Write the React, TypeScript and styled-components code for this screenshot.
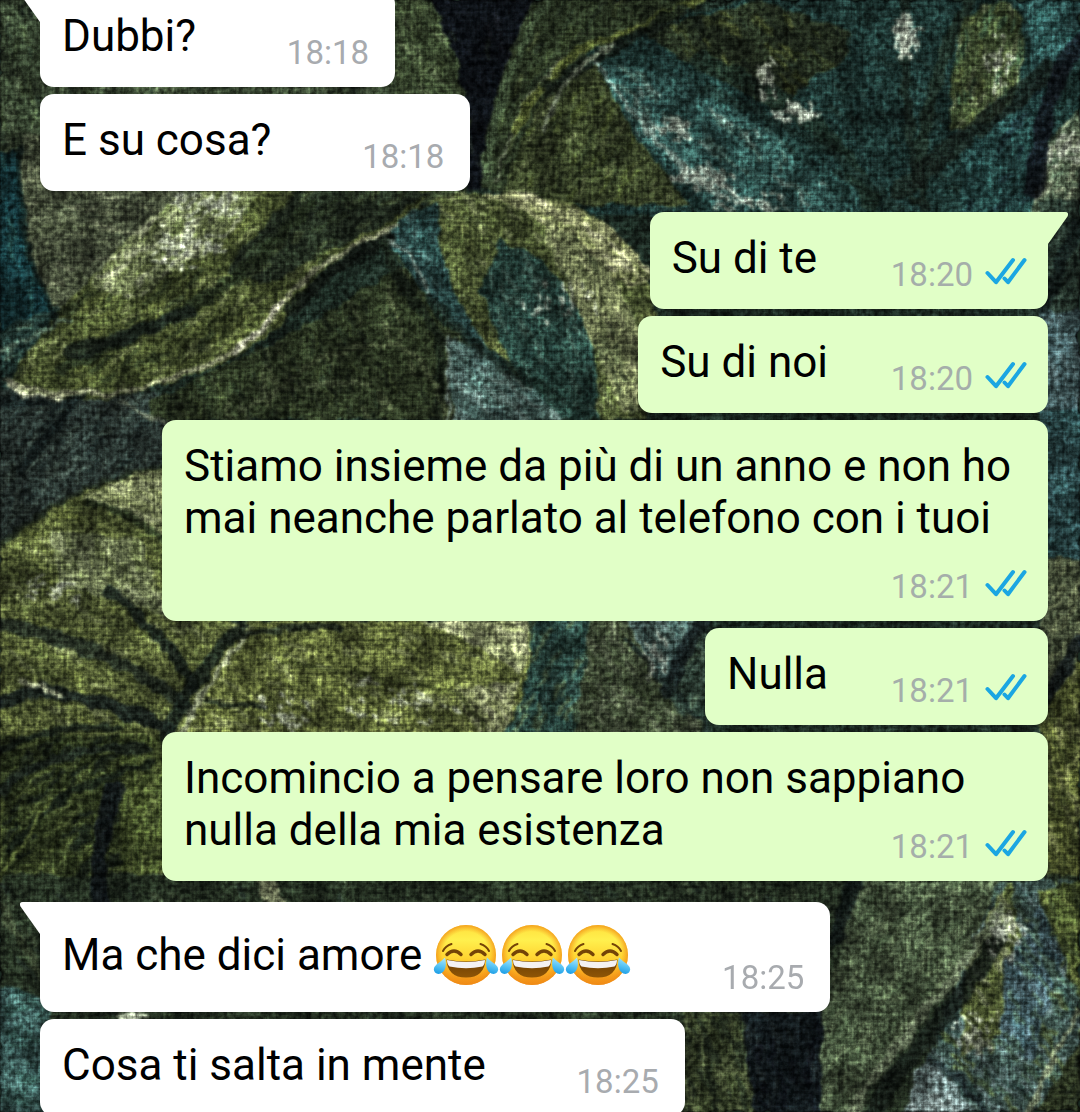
import React from "react";
import styled, { createGlobalStyle } from "styled-components";

const GlobalStyle = createGlobalStyle`
  *, *::before, *::after { box-sizing: border-box; }
  html, body { margin: 0; }
  body {
    background: #1b2a22;
    font-family: Roboto, "Noto Sans", sans-serif;
    overflow: hidden;
  }
`;

/* ---------- wallpaper: painted leaves on canvas ---------- */

type Leaf = {
  d: string;
  box: [number, number, number, number];
  fill: string;
  tones: string[];
  angle: number;
  count: number;
  length?: number;
};

const leaves: Leaf[] = [
  { d: "M0 0H420V200H0Z", box: [0, 0, 420, 200], fill: "#36452f", tones: ["#4d5f3c", "#26331f", "#5d6f50", "#1d2a20"], angle: 80, count: 260 },
  { d: "M0 150H22Q14 240 55 320L0 350Z", box: [0, 150, 60, 200], fill: "#12363a", tones: ["#1d4a4c", "#0c2427", "#2a5a55"], angle: 85, count: 70 },
  { d: "M20 135H200L180 250 60 325Q14 240 20 135Z", box: [15, 135, 190, 190], fill: "#4a533c", tones: ["#5d6549", "#39422c", "#6b7158", "#2c3626"], angle: 8, count: 130 },
  { d: "M0 330L60 305 70 345 0 400Z", box: [0, 300, 75, 100], fill: "#223b35", tones: ["#3d5f4f", "#142422", "#58715c"], angle: -25, count: 60 },
  { d: "M0 390L180 395 170 480 0 560Z", box: [0, 390, 180, 170], fill: "#27332f", tones: ["#36433b", "#16211f", "#415047"], angle: -48, count: 120 },
  { d: "M150 400L300 330 460 230 530 420H150Z", box: [150, 230, 380, 190], fill: "#29341f", tones: ["#3e4b2b", "#182117", "#4d573a", "#202c1e"], angle: 70, count: 220 },
  { d: "M395 0H430Q480 90 465 200H395Z", box: [395, 0, 80, 200], fill: "#38472c", tones: ["#4a5a38", "#2a3722", "#556343"], angle: 75, count: 90 },
  { d: "M430 0H550Q500 90 485 190H465Q480 90 430 0Z", box: [430, 0, 120, 190], fill: "#0c1015", tones: ["#15181d", "#080a0e", "#1b241d"], angle: 85, count: 50 },
  { d: "M535 0H700L545 100 505 190H480Q490 80 535 0Z", box: [480, 0, 220, 190], fill: "#293521", tones: ["#3e4e2c", "#182018", "#56643b", "#222e20"], angle: -55, count: 130 },
  { d: "M590 45L740 0H1080V215H560Z", box: [560, 0, 520, 215], fill: "#1b3531", tones: ["#254844", "#132421", "#2b534e", "#1d302a"], angle: 35, count: 420 },
  { d: "M545 100L600 60 630 130 690 205H500Q515 140 545 100Z", box: [500, 60, 190, 145], fill: "#364124", tones: ["#4c5a28", "#242e1b", "#5c6740", "#2d3820"], angle: -55, count: 120 },
  { d: "M594 62Q690 70 770 130L850 212H720Q630 140 594 62Z", box: [594, 60, 260, 155], fill: "#2b504b", tones: ["#38625c", "#204540", "#557569", "#2a4f4b", "#7b9589"], angle: 42, count: 230 },
  { d: "M640 30L760 0 850 30Q855 70 820 70L780 110 700 70Z", box: [640, 0, 215, 115], fill: "#222c1d", tones: ["#353f20", "#151d16", "#4a5328"], angle: 40, count: 100 },
  { d: "M960 20Q1000 -10 1020 10 1035 70 1000 120L950 130Q950 60 960 20Z", box: [940, 0, 90, 130], fill: "#425330", tones: ["#5f6f3c", "#34452a", "#7b8862", "#2d4b38"], angle: -70, count: 110 },
  { d: "M1020 0H1080V50L1030 90Q1035 40 1020 0Z", box: [1015, 0, 65, 90], fill: "#2c5654", tones: ["#386866", "#1f4341"], angle: -45, count: 50 },
  { d: "M1080 110Q1030 150 1030 215H1080Z", box: [1030, 110, 50, 105], fill: "#50614a", tones: ["#758462", "#3b4f3e", "#9aa482"], angle: -45, count: 60 },
  { d: "M960 150L1055 60 1045 160 1030 215H960Z", box: [955, 60, 100, 155], fill: "#234845", tones: ["#316160", "#142d2b", "#122126"], angle: -50, count: 90 },
  { d: "M1040 200H1080V320H1040Z", box: [1040, 200, 40, 120], fill: "#26362d", tones: ["#3c5142", "#131e1a"], angle: -60, count: 45 },
  { d: "M1040 310H1080V420H1040Z", box: [1040, 310, 40, 110], fill: "#405a5c", tones: ["#5a7375", "#2c4346"], angle: 75, count: 60 },
  { d: "M1040 410H1080V570H1040Z", box: [1040, 410, 40, 160], fill: "#28484a", tones: ["#365d60", "#18312f"], angle: 20, count: 60 },
  { d: "M1040 560H1080V660L1040 710Z", box: [1040, 560, 40, 150], fill: "#49533a", tones: ["#646b4a", "#323c2a"], angle: -50, count: 60 },
  { d: "M1040 710L1080 660V900H1040Z", box: [1040, 660, 40, 240], fill: "#454d24", tones: ["#606830", "#2f381b", "#707648"], angle: 70, count: 90 },
  { d: "M5 386Q50 315 100 270 150 205 205 188L430 188 405 222Q350 245 310 282 285 330 235 357 165 392 90 400 20 402 5 386Z", box: [0, 186, 430, 215], fill: "#465229", tones: ["#626f36", "#323e20", "#788452", "#535f2f", "#25311d"], angle: -38, count: 560, length: 22 },
  { d: "M90 285Q150 200 205 190L262 190 225 240 130 300Z", box: [90, 190, 175, 115], fill: "#707d50", tones: ["#8f9970", "#5f6f3a", "#a5ab88", "#4b5a2e"], angle: -38, count: 190 },
  { d: "M295 190L430 190 385 226Q330 245 270 285L225 270Z", box: [225, 190, 210, 95], fill: "#232e20", tones: ["#303d27", "#182119", "#3f4b2e"], angle: -35, count: 80 },
  { d: "M385 236Q400 205 460 192L560 200Q630 225 655 300L645 420H560Q460 350 430 300 400 270 385 236Z", box: [385, 190, 270, 230], fill: "#4b582e", tones: ["#65723c", "#3a4824", "#788256", "#465533"], angle: 42, count: 330 },
  { d: "M385 236Q405 205 440 202 430 260 480 335L530 395Q440 320 430 300 402 270 385 236Z", box: [385, 200, 150, 200], fill: "#274845", tones: ["#365a58", "#183330", "#4a6c67"], angle: 55, count: 110 },
  { d: "M500 240Q560 260 590 330L600 420H545Q500 350 480 290Z", box: [480, 235, 120, 185], fill: "#25433b", tones: ["#33554a", "#1a342f", "#425f54"], angle: 60, count: 150 },
  { d: "M478 194Q590 185 655 275L630 290Q560 240 530 215 500 200 478 194Z", box: [478, 188, 178, 100], fill: "#8e9464", tones: ["#aeb080", "#727b45", "#c0c098", "#596436"], angle: 28, count: 130 },
  { d: "M545 220Q610 250 640 330L640 410 620 410Q590 330 545 240Z", box: [545, 220, 100, 190], fill: "#6f784e", tones: ["#92986b", "#56613c", "#3e4a2f"], angle: 65, count: 130 },
  { d: "M448 335Q520 370 565 425L455 425Q445 370 448 335Z", box: [440, 330, 130, 95], fill: "#45625b", tones: ["#5c7a74", "#314c48", "#708a82"], angle: 45, count: 110 },
  { d: "M0 548Q60 485 170 468L230 620H540Q532 690 500 740H160L165 910H0Z", box: [0, 465, 545, 445], fill: "#525d2f", tones: ["#69753e", "#404b26", "#7a8454", "#606b30", "#374320"], angle: 25, count: 760, length: 22 },
  { d: "M80 500Q120 475 170 470V545Q130 505 80 500Z", box: [80, 468, 90, 80], fill: "#828c5c", tones: ["#9aa174", "#6e7a48"], angle: 30, count: 90 },
  { d: "M50 530L140 540 170 620 120 600 60 590Z", box: [50, 530, 120, 90], fill: "#66714a", tones: ["#7c8560", "#515d32"], angle: 60, count: 90 },
  { d: "M230 620H540Q532 690 500 740H180Z", box: [180, 618, 360, 120], fill: "#5e6932", tones: ["#727c44", "#4b5629", "#808a58"], angle: 18, count: 240 },
  { d: "M410 620H530Q530 655 520 675 480 640 410 620Z", box: [410, 618, 120, 60], fill: "#8c9466", tones: ["#a5aa80", "#757f50"], angle: 20, count: 90 },
  { d: "M450 690L520 680 505 740H480Q470 710 450 690Z", box: [445, 675, 80, 65], fill: "#8c9466", tones: ["#a0a57c", "#6b7544"], angle: 60, count: 60 },
  { d: "M0 735H165V910H0Z", box: [0, 735, 165, 175], fill: "#2d381c", tones: ["#445226", "#18210f", "#556432", "#0e1413"], angle: -38, count: 330 },
  { d: "M120 735H165V885L120 905Z", box: [118, 735, 48, 165], fill: "#455426", tones: ["#5c6b38", "#2e3a1b"], angle: -70, count: 80 },
  { d: "M530 618H610L580 735H505Q535 680 530 618Z", box: [505, 618, 105, 117], fill: "#2b4c43", tones: ["#3c6058", "#1a322d", "#5f734c", "#22403c"], angle: -60, count: 130 },
  { d: "M590 618H640L705 735H575Z", box: [575, 618, 130, 117], fill: "#3a4630", tones: ["#4b573e", "#28331f", "#566049"], angle: 55, count: 130 },
  { d: "M625 618H705L665 690Z", box: [625, 618, 80, 75], fill: "#4b655e", tones: ["#75908c", "#314a45", "#3d5c57"], angle: 60, count: 80 },
  { d: "M705 618L665 690 685 720Q715 700 715 650Z", box: [665, 618, 50, 100], fill: "#32463a", tones: ["#465b45", "#1e2d25"], angle: -50, count: 40 },
  { d: "M0 875H1080V1112H0Z", box: [0, 878, 1080, 234], fill: "#232f20", tones: ["#33432b", "#151d17", "#45553a", "#1b2721"], angle: 50, count: 480 },
  { d: "M0 985L50 1000V1112H0Z", box: [0, 985, 50, 127], fill: "#345652", tones: ["#456c67", "#26463f"], angle: 8, count: 80 },
  { d: "M855 880H1005Q990 930 940 990L850 1112H822V1015L835 970Z", box: [822, 880, 185, 232], fill: "#43533a", tones: ["#546547", "#33422c", "#5e6e4e"], angle: -55, count: 270 },
  { d: "M738 1012H822V1112H750Z", box: [738, 1012, 84, 100], fill: "#11191c", tones: ["#1b2423", "#0a0e14"], angle: 75, count: 60 },
  { d: "M684 1012H740L755 1112H684Z", box: [684, 1012, 70, 100], fill: "#343f24", tones: ["#4a5536", "#1d281d"], angle: 70, count: 90 },
  { d: "M1000 880H1080V1112H905Q930 1060 945 1010Z", box: [900, 880, 180, 232], fill: "#3e5750", tones: ["#587270", "#2a433f", "#6d8482", "#55642e", "#384f39"], angle: 48, count: 430 },
  { d: "M990 910L1010 880 1025 960 1010 1030 960 1060 965 970Z", box: [960, 880, 65, 180], fill: "#556332", tones: ["#7b8558", "#44512a", "#969f78"], angle: 58, count: 90 },
  { d: "M1005 960L1040 905 1060 960 1035 1060 1000 1040Z", box: [1000, 900, 60, 160], fill: "#405c62", tones: ["#5c7a82", "#2a4348", "#4b6850"], angle: 55, count: 90 },
  { d: "M1080 880V1000L1035 890Z", box: [1030, 880, 50, 120], fill: "#495829", tones: ["#69763a", "#2e3b22"], angle: 60, count: 50 },
  { d: "M1080 1040V1112H1035Z", box: [1030, 1040, 50, 72], fill: "#2b3520", tones: ["#3e4a2b", "#192118"], angle: -50, count: 40 },
  { d: "M915 1070L935 1060 975 1112H905Z", box: [900, 1060, 75, 52], fill: "#6f8482", tones: ["#8a9b98", "#4f6663"], angle: 45, count: 50 },
];

type Vein = [string, string, number];

const veins: Vein[] = [
  ["M5 380Q60 402 130 390 225 368 268 325 300 275 345 250L398 224", "#888c6c", 5],
  ["M8 384Q30 402 60 398", "#b4b896", 7],
  ["M235 352Q268 325 282 302", "#b4b59c", 5],
  ["M60 368Q150 330 210 295 260 262 310 205", "#202a1a", 12],
  ["M70 352Q140 335 190 310", "#151d17", 14],
  ["M290 310Q335 262 390 238", "#0f1511", 12],
  ["M385 236Q410 250 425 285 445 330 530 390", "#7f9286", 3],
  ["M430 300Q470 350 560 400", "#14231f", 12],
  ["M448 335V420", "#6d8078", 3],
  ["M385 240Q395 285 440 335V400", "#151e15", 10],
  ["M270 400Q320 340 400 345 430 360 445 415", "#3f4a30", 5],
  ["M240 410Q300 375 370 385", "#414b33", 4],
  ["M20 150Q16 250 58 320", "#0f211f", 6],
  ["M0 350L70 320", "#57715d", 4],
  ["M120 402L165 424", "#79856c", 3],
  ["M0 400Q40 405 75 402L20 470", "#15201f", 10],
  ["M0 548Q60 485 165 466", "#1e281b", 5],
  ["M90 505Q135 508 170 550", "#25301c", 8],
  ["M110 592Q125 600 140 620 170 640 195 690", "#121b18", 11],
  ["M0 625Q80 635 165 690L190 710", "#232e25", 14],
  ["M0 702L40 690 110 705 170 728", "#10191a", 14],
  ["M22 682L60 695", "#a6ad86", 6],
  ["M165 735Q195 675 240 625", "#18221c", 14],
  ["M182 735Q205 680 250 632", "#96a07c", 5],
  ["M225 640Q270 625 340 627", "#161f18", 8],
  ["M280 662Q390 680 450 690 480 710 488 735", "#3c4720", 4],
  ["M205 702L265 708", "#151d16", 6],
  ["M0 750Q60 722 120 728", "#151e17", 7],
  ["M0 790Q60 740 150 750", "#17201a", 9],
  ["M10 850Q60 780 150 765", "#141c14", 8],
  ["M100 905Q95 840 115 790", "#0c1015", 18],
  ["M0 800L0 880Q25 840 50 800", "#56652f", 4],
  ["M548 0Q495 80 485 180", "#43573a", 9],
  ["M560 60Q510 110 497 180", "#6b765c", 3],
  ["M700 0Q640 30 590 45 550 65 515 130", "#59662c", 9],
  ["M680 12Q620 45 545 85", "#121a14", 12],
  ["M612 45Q560 70 545 130", "#748069", 5],
  ["M596 62Q640 130 720 200", "#799085", 4],
  ["M700 60Q830 110 870 200", "#1a2b23", 18],
  ["M700 90Q800 120 900 210", "#1a2e29", 9],
  ["M905 0Q900 110 925 210", "#17241e", 10],
  ["M970 0Q930 60 915 200", "#1c2c23", 12],
  ["M850 40Q880 130 915 195", "#152a28", 7],
  ["M900 190Q960 140 1050 70", "#15201b", 20],
  ["M1080 40Q1045 80 1035 190", "#0f141b", 18],
  ["M1080 225Q1055 270 1045 310", "#0f1918", 12],
  ["M1080 640L1045 700", "#12191b", 12],
  ["M705 620Q690 640 667 692", "#10191a", 14],
  ["M625 638Q665 680 710 732", "#1b2824", 5],
  ["M1002 905Q975 955 930 1005 885 1060 850 1112", "#6a785c", 9],
  ["M1000 935Q955 1010 895 1075L875 1112", "#141c18", 18],
  ["M855 880L835 940", "#0e1616", 14],
  ["M1080 1010Q1050 1060 1030 1112", "#7b8766", 5],
  ["M930 1060Q965 1080 985 1112", "#1d292b", 8],
  ["M265 882L275 902", "#89916a", 18],
  ["M0 905L40 975", "#39452f", 8],
  ["M120 1015L145 1018", "#99a38b", 7],
];

/* light flecks where the paint catches the light: x, y, spread x, spread y, slope, amount */
const flecks: [number, number, number, number, number, number][] = [
  [672, 128, 24, 14, 40, 50],
  [700, 178, 32, 12, 35, 80],
  [745, 200, 40, 12, 30, 36],
  [795, 110, 22, 10, 40, 55],
  [765, 75, 10, 24, 65, 26],
  [906, 32, 13, 22, 80, 80],
  [998, 60, 14, 34, 80, 36],
  [1062, 152, 18, 16, -45, 44],
  [180, 245, 44, 26, -20, 60],
  [210, 205, 44, 16, -35, 44],
  [560, 300, 40, 20, 60, 30],
  [1004, 930, 24, 26, 50, 44],
  [970, 1030, 22, 30, 50, 40],
  [55, 590, 36, 18, 0, 24],
  [280, 712, 30, 24, 40, 36],
  [400, 700, 60, 26, 30, 36],
  [655, 655, 14, 24, 70, 26],
];

const createRandom = (seed: number) => {
  let s = seed;
  return () => {
    s = (s * 1664525 + 1013904223) % 4294967296;
    return s / 4294967296;
  };
};

const random = createRandom(73);

const dab = (x: number, y: number, angle: number, length: number) => {
  const a = (angle * Math.PI) / 180;
  return `M${x.toFixed(1)} ${y.toFixed(1)}l${(Math.cos(a) * length).toFixed(1)} ${(Math.sin(a) * length).toFixed(1)}`;
};

const brushwork = leaves.map(({ box: [x, y, w, h], tones, angle, count, length = 18 }) =>
  tones.map((tone) => ({
    tone,
    d: Array.from({ length: Math.ceil(count / tones.length) }, () =>
      dab(x + random() * w, y + random() * h, angle + (random() - 0.5) * 34, length * (0.4 + random())),
    ).join(""),
  })),
);

const fleckPaths = flecks.map(([x, y, rx, ry, angle, count]) =>
  Array.from({ length: count }, () => {
    const t = random() * Math.PI * 2;
    const r = random();
    return dab(x + Math.cos(t) * r * rx, y + Math.sin(t) * r * ry, angle + (random() - 0.5) * 50, 2 + random() * 5);
  }).join(""),
);

const WallpaperArt = styled.svg`
  position: fixed;
  inset: 0;
  z-index: -1;
  width: 100%;
  height: 100%;
`;

const Wallpaper = () => (
  <WallpaperArt viewBox="0 0 1080 1112" preserveAspectRatio="xMidYMin slice" aria-hidden="true">
    <defs>
      <filter id="paint" x="0" y="0" width="100%" height="100%" colorInterpolationFilters="sRGB">
        <feTurbulence type="fractalNoise" baseFrequency="0.06" numOctaves="3" seed="4" result="wobble" />
        <feDisplacementMap in="SourceGraphic" in2="wobble" scale="12" xChannelSelector="R" yChannelSelector="G" result="moved" />
        <feGaussianBlur in="moved" stdDeviation="1" result="soft" />
        <feTurbulence type="fractalNoise" baseFrequency="0.03 0.36" numOctaves="2" seed="8" result="weft" />
        <feColorMatrix in="weft" type="matrix" values="1.6 0 0 0 -0.3  1.6 0 0 0 -0.3  1.6 0 0 0 -0.3  0 0 0 0 1" result="weftGrey" />
        <feTurbulence type="fractalNoise" baseFrequency="0.36 0.03" numOctaves="2" seed="21" result="warp" />
        <feColorMatrix in="warp" type="matrix" values="1.6 0 0 0 -0.3  1.6 0 0 0 -0.3  1.6 0 0 0 -0.3  0 0 0 0 1" result="warpGrey" />
        <feTurbulence type="fractalNoise" baseFrequency="0.18" numOctaves="3" seed="2" result="grain" />
        <feColorMatrix in="grain" type="matrix" values="2.2 0 0 0 -0.6  2.2 0 0 0 -0.6  2.2 0 0 0 -0.6  0 0 0 0 1" result="grainGrey" />
        <feTurbulence type="fractalNoise" baseFrequency="0.03" numOctaves="2" seed="12" result="cloud" />
        <feColorMatrix in="cloud" type="matrix" values="2 0 0 0 -0.5  2 0 0 0 -0.5  2 0 0 0 -0.5  0 0 0 0 1" result="cloudGrey" />
        <feComposite in="soft" in2="weftGrey" operator="arithmetic" k1="0.5" k2="0.74" k3="0" k4="0" result="a" />
        <feComposite in="a" in2="warpGrey" operator="arithmetic" k1="0.5" k2="0.74" k3="0" k4="0" result="b" />
        <feComposite in="b" in2="cloudGrey" operator="arithmetic" k1="0.7" k2="0.62" k3="0" k4="0" result="c" />
        <feComposite in="c" in2="grainGrey" operator="arithmetic" k1="0.7" k2="0.6" k3="0.03" k4="-0.01" result="d" />
        <feColorMatrix in="d" type="saturate" values="0.9" />
      </filter>
      {leaves.map((leaf, i) => (
        <clipPath key={i} id={`leaf-${i}`}>
          <path d={leaf.d} />
        </clipPath>
      ))}
    </defs>
    <g filter="url(#paint)">
      <rect width="1080" height="1112" fill="#1b2a22" />
      {leaves.map((leaf, i) => (
        <g key={i} clipPath={`url(#leaf-${i})`} fill="none" strokeLinecap="round">
          <path d={leaf.d} fill={leaf.fill} />
          {brushwork[i].map(({ tone, d }) => (
            <path key={tone} d={d} stroke={tone} strokeWidth="4" strokeOpacity="0.65" />
          ))}
        </g>
      ))}
      <g fill="none" strokeLinecap="round">
        {veins.map(([d, colour, width], i) => (
          <path key={i} d={d} stroke={colour} strokeWidth={width} strokeOpacity="0.85" />
        ))}
        {fleckPaths.map((d, i) => (
          <path key={i} d={d} stroke="#c8d0bb" strokeWidth="3" strokeOpacity="0.7" />
        ))}
      </g>
    </g>
  </WallpaperArt>
);

/* ---------- icons ---------- */

const TickMark = styled.svg`
  display: block;
  width: 42px;
  height: 28px;
`;

const ReadTicks = () => (
  <TickMark viewBox="0 0 42 28" role="img" aria-label="Letto" fill="none" stroke="#1ba6e2" strokeWidth="4" strokeLinecap="round" strokeLinejoin="round">
    <path d="M2.500 16L11 25.200L28 3" />
    <path d="M19.500 21.500L23 25.200L39.500 3" />
  </TickMark>
);

const Emoji = styled.svg`
  width: 66px;
  height: 65px;
  vertical-align: -17px;
`;

const Joy = () => (
  <Emoji viewBox="0 0 66 65" role="img" aria-label="😂">
    <defs>
      <linearGradient id="joy-face" x1="0" y1="0" x2="0" y2="1">
        <stop offset="0" stopColor="#ffdf3c" />
        <stop offset="0.25" stopColor="#fff04e" />
        <stop offset="0.55" stopColor="#ffd431" />
        <stop offset="0.8" stopColor="#f9a81f" />
        <stop offset="1" stopColor="#ee8512" />
      </linearGradient>
      <radialGradient id="joy-rim" cx="0.5" cy="0.5" r="0.5">
        <stop offset="0.78" stopColor="#f59a1b" stopOpacity="0" />
        <stop offset="1" stopColor="#f08c16" stopOpacity="0.75" />
      </radialGradient>
      <linearGradient id="joy-mouth" x1="0" y1="0" x2="0" y2="1">
        <stop offset="0" stopColor="#6b3d04" />
        <stop offset="1" stopColor="#8f5606" />
      </linearGradient>
      <linearGradient id="joy-tear" x1="0.6" y1="0" x2="0.4" y2="1">
        <stop offset="0" stopColor="#a9e6fb" />
        <stop offset="0.5" stopColor="#5cc6f5" />
        <stop offset="1" stopColor="#1d9ee6" />
      </linearGradient>
    </defs>
    <circle cx="33" cy="33" r="30" fill="url(#joy-face)" />
    <circle cx="33" cy="33" r="30" fill="url(#joy-rim)" />
    <g fill="none" stroke="#744407" strokeLinecap="round">
      <path d="M10 29Q12.500 24 18.500 22" strokeWidth="2" />
      <path d="M56 29Q53.500 24 47.500 22" strokeWidth="2" />
      <path d="M14 32.500Q21 25.500 28 32.500" strokeWidth="3.400" />
      <path d="M38 32.500Q45 25.500 52 32.500" strokeWidth="3.400" />
    </g>
    <path d="M13.500 37.500Q33 41.500 52.500 37.500Q51.500 55.500 33 55.500Q14.500 55.500 13.500 37.500Z" fill="url(#joy-mouth)" />
    <path d="M14 38Q33 42 52 38Q52 42.500 49.500 44.500Q33 48 16.500 44.500Q14 42.500 14 38Z" fill="#f4f2f3" />
    <path d="M12 35.500Q14.500 45 10 50Q5.500 53.500 2 50.500Q-1 46.500 3.500 42.500Q8 39.500 12 35.500Z" fill="url(#joy-tear)" />
    <path d="M54 35.500Q51.500 45 56 50Q60.500 53.500 64 50.500Q67 46.500 62.500 42.500Q58 39.500 54 35.500Z" fill="url(#joy-tear)" />
  </Emoji>
);

/* ---------- conversation ---------- */

const Chat = styled.main`
  height: 100vh;
  overflow: hidden;
`;

/* the list is scrolled a little, so the first bubble runs under the top edge */
const Conversation = styled.ol`
  display: flex;
  flex-direction: column;
  gap: 21px;
  margin: -10px 0 0;
  padding: 0 32px 0 40px;
  list-style: none;
`;

const Group = styled.li<{ $mine: boolean }>`
  display: flex;
  flex-direction: column;
  align-items: ${({ $mine }) => ($mine ? "flex-end" : "flex-start")};
  gap: 7px;
`;

const Bubble = styled.article<{ $mine: boolean; $first: boolean }>`
  position: relative;
  display: grid;
  max-width: calc(100% - 122px);
  padding: 20px ${({ $mine }) => ($mine ? "21px" : "26px")} 16px 22px;
  border-radius: 14px;
  ${({ $mine, $first }) => $first && ($mine ? "border-top-right-radius: 0;" : "border-top-left-radius: 0;")}
  background: ${({ $mine }) => ($mine ? "#e1ffc7" : "#ffffff")};
`;

const Tail = styled.svg<{ $mine: boolean }>`
  position: absolute;
  top: 0;
  ${({ $mine }) => ($mine ? "left: 100%;" : "right: 100%; transform: scaleX(-1);")}
  width: 20px;
  height: 36px;
  fill: ${({ $mine }) => ($mine ? "#e1ffc7" : "#ffffff")};
`;

const Words = styled.p`
  grid-area: 1 / 1;
  margin: 0;
  padding-bottom: 9px;
  color: #000000;
  font-size: 44px;
  line-height: 52px;
`;

/* keeps room at the end of the last line for the time and ticks */
const Reserve = styled.span<{ $mine: boolean }>`
  display: inline-block;
  width: ${({ $mine }) => ($mine ? "199px" : "173px")};
`;

const Meta = styled.footer<{ $mine: boolean }>`
  grid-area: 1 / 1;
  place-self: end;
  display: flex;
  align-items: flex-start;
  gap: 12px;
  color: ${({ $mine }) => ($mine ? "#a5aeaa" : "#a8abaf")};
  font-size: 33px;
  line-height: 36px;
`;

const Clock = styled.time`
  min-width: 82px;
`;

type Message = { text: string; time: string; laughs?: number };
type Run = { mine: boolean; messages: Message[] };

const runs: Run[] = [
  {
    mine: false,
    messages: [
      { text: "Dubbi?", time: "18:18" },
      { text: "E su cosa?", time: "18:18" },
    ],
  },
  {
    mine: true,
    messages: [
      { text: "Su di te\u00a0", time: "18:20" },
      { text: "Su di noi", time: "18:20" },
      { text: "Stiamo insieme da più di un anno e non ho mai neanche parlato al telefono con i tuoi", time: "18:21" },
      { text: "Nulla", time: "18:21" },
      { text: "Incomincio a pensare loro non sappiano nulla della mia esistenza", time: "18:21" },
    ],
  },
  {
    mine: false,
    messages: [
      { text: "Ma che dici amore ", time: "18:25", laughs: 3 },
      { text: "Cosa ti salta in mente", time: "18:25" },
    ],
  },
];

const App = () => (
  <>
    <GlobalStyle />
    <Wallpaper />
    <Chat>
      <Conversation>
        {runs.map(({ mine, messages }, r) => (
          <Group key={r} $mine={mine}>
            {messages.map(({ text, time, laughs = 0 }, i) => (
              <Bubble key={i} $mine={mine} $first={i === 0}>
                {i === 0 && (
                  <Tail $mine={mine} viewBox="0 0 20 36" aria-hidden="true">
                    <path d="M0 0H17Q21.500 0 19.500 4.500L0 32Z" />
                  </Tail>
                )}
                <Words>
                  {text}
                  {Array.from({ length: laughs }, (_, n) => (
                    <Joy key={n} />
                  ))}
                  <Reserve $mine={mine} />
                </Words>
                <Meta $mine={mine}>
                  <Clock>{time}</Clock>
                  {mine && <ReadTicks />}
                </Meta>
              </Bubble>
            ))}
          </Group>
        ))}
      </Conversation>
    </Chat>
  </>
);

export default App;
